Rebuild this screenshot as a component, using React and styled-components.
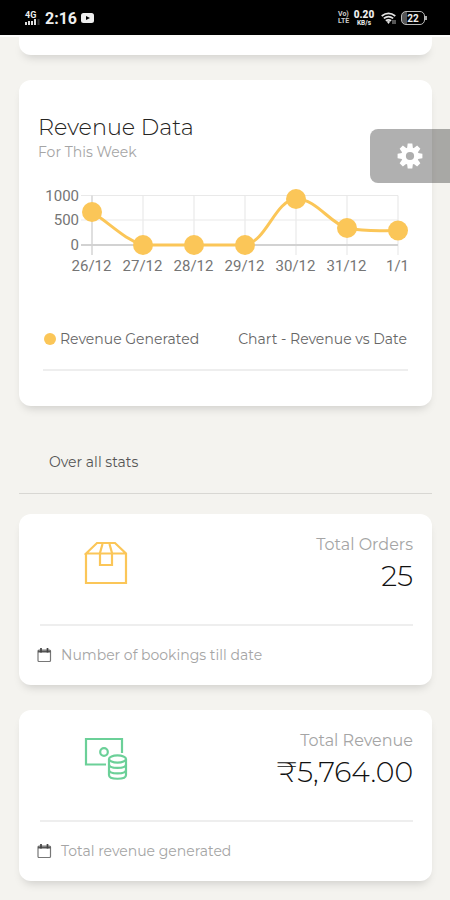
import React from "react";
import styled, { createGlobalStyle } from "styled-components";

const days = [
  { label: "26/12", x: 54, y: 32 },
  { label: "27/12", x: 105, y: 65 },
  { label: "28/12", x: 156, y: 65 },
  { label: "29/12", x: 207, y: 65 },
  { label: "30/12", x: 258, y: 19 },
  { label: "31/12", x: 309, y: 48 },
  { label: "1/1", x: 360, y: 50.5 },
];

const App = () => {
  return (
    <Page>
      <GlobalStyle />
      <StatusBar>
        <Stack>
          <span>4G</span>
          <Bars />
        </Stack>
        <Clock>2:16</Clock>
        <VideoIcon />
        <Spacer />
        <Volte>
          <span>Vo)</span>
          <span>LTE</span>
        </Volte>
        <Speed>
          <b>0.20</b>
          <span>KB/s</span>
        </Speed>
        <WifiIcon />
        <Battery>22</Battery>
      </StatusBar>
      <Content>
        <CardEnd />
        <ChartCard>
          <Title>Revenue Data</Title>
          <SubTitle>For This Week</SubTitle>
          <RevenueChart />
          <Legend>
            <Dot />
            <LegendText>Revenue Generated</LegendText>
            <Spacer />
            <LegendText>Chart - Revenue vs Date</LegendText>
          </Legend>
          <ChartLine />
        </ChartCard>
        <Section>Over all stats</Section>
        <StatCard>
          <StatTop>
            <BoxIcon />
            <Numbers>
              <Label>Total Orders</Label>
              <Value>25</Value>
            </Numbers>
          </StatTop>
          <StatFooter>
            <CalendarIcon />
            <Note>Number of bookings till date</Note>
          </StatFooter>
        </StatCard>
        <StatCard>
          <StatTop>
            <MoneyIcon />
            <Numbers>
              <Label>Total Revenue</Label>
              <Value>₹5,764.00</Value>
            </Numbers>
          </StatTop>
          <StatFooter>
            <CalendarIcon />
            <Note>Total revenue generated</Note>
          </StatFooter>
        </StatCard>
      </Content>
      <Settings>
        <GearIcon />
      </Settings>
    </Page>
  );
};

const Bars = () => (
  <svg width="15" height="6" viewBox="0 0 15 6">
    <path d="M1 3v3M4 2v4M7 2v4M10 0v6" stroke="#ddd" strokeWidth="2" />
    <path d="M13.5 0v6" stroke="#333" strokeWidth="2" />
  </svg>
);

const VideoIcon = () => (
  <svg width="13" height="10" viewBox="0 0 13 10">
    <rect width="13" height="10" rx="2.5" fill="#eee" />
    <path d="M5 3l4 2-4 2z" fill="#000" />
  </svg>
);

const WifiIcon = () => (
  <svg width="16" height="13" viewBox="0 0 16 13">
    <g fill="none" stroke="#e5e5e5" strokeWidth="1.7">
      <path d="M0.7 4Q7.5-1.4 14.3 4" />
      <path d="M2.8 6.4q4.7-3.6 9.4 0" />
      <path d="M4.8 8.8q2.7-2 5.4 0" />
    </g>
    <path d="M5.7 9.6q1.8-1.2 3.6 0L7.5 12z" fill="#e5e5e5" />
    <path d="M12 8v4M14 8v4" stroke="#aaa" strokeWidth="1" />
  </svg>
);

const RevenueChart = () => (
  <Chart viewBox="0 0 380 100">
    <g stroke="#e9e9e9" strokeWidth="1.2">
      <path d="M43 15.5H360M43 40H360" />
      {days.map((d) => (
        <path key={d.label} d={`M${d.x} 15.5V75`} />
      ))}
    </g>
    <path d="M54 15.5V75" stroke="#d2d2d2" strokeWidth="1.2" />
    <path d="M43 65H360" stroke="#d2d2d2" strokeWidth="2" />
    <path
      d="M54 32C74 45 86 59 105 65H207C229 61 237 20 258 19C279 19 290 42 309 48C329 52 340 50.5 360 50.5"
      fill="none"
      stroke="#fbc658"
      strokeWidth="3"
    />
    {days.map((d) => (
      <circle key={d.label} cx={d.x} cy={d.y} r="10" fill="#fbc658" />
    ))}
    <g textAnchor="end">
      <text x="41" y="20.5">1000</text>
      <text x="41" y="45">500</text>
      <text x="41" y="69.5">0</text>
    </g>
    <g textAnchor="middle">
      {days.map((d) => (
        <text key={d.label} x={d.x - 0.5} y="91">
          {d.label}
        </text>
      ))}
    </g>
  </Chart>
);

const BoxIcon = () => (
  <StatIcon viewBox="0 0 44 44" stroke="#fbc658">
    <path d="M2 12.5V42H42V12.5L31 2H13L2 12.5H42" />
    <path d="M18.5 3L16 12V24H28V12L25.5 3" />
  </StatIcon>
);

const MoneyIcon = () => (
  <StatIcon viewBox="0 0 44 44" stroke="#6bd098">
    <path d="M22 27.5H2V2H38V16" />
    <circle cx="20" cy="15" r="3.8" />
    <ellipse cx="33.5" cy="22" rx="8.5" ry="3.7" />
    <path d="M25 22V38C25 43 42 43 42 38V22" />
    <path d="M25 27.5C25 32 42 32 42 27.5M25 33C25 37.5 42 37.5 42 33" />
  </StatIcon>
);

const CalendarIcon = () => (
  <svg width="15" height="16" viewBox="0 0 15 16">
    <rect x="1" y="3" width="12.5" height="11.5" rx="1" fill="none" stroke="#777" strokeWidth="1.2" />
    <path d="M1 4.5H13.5" stroke="#555" strokeWidth="2" />
    <path d="M4 1V5.5M10.5 1V5.5" stroke="#444" strokeWidth="1.7" />
  </svg>
);

const GearIcon = () => (
  <svg width="26" height="26" viewBox="-13 -13 26 26">
    <g fill="#fff">
      {[0, 45, 90, 135].map((angle) => (
        <path key={angle} d="M-2.3-12.4H2.3L2.9-8V8L2.3 12.4H-2.3L-2.9 8V-8Z" transform={`rotate(${angle})`} />
      ))}
      <circle r="8.8" />
    </g>
    <circle r="4.1" fill="#aeaeae" />
  </svg>
);

const GlobalStyle = createGlobalStyle`
  * {
    box-sizing: border-box;
  }
  body {
    margin: 0;
    background-color: #f4f3ef;
    font-family: Montserrat, Inter, sans-serif;
    overflow: hidden;
  }
  svg {
    display: block;
    flex: none;
  }
`;
const Page = styled.div`
  position: relative;
  width: 450px;
  height: 900px;
  overflow: hidden;
  background-color: #f4f3ef;
`;
const StatusBar = styled.header`
  display: flex;
  align-items: center;
  height: 37px;
  padding: 1px 25px 0;
  border-bottom: 2px solid #fdfdfc;
  background-color: black;
  color: #eee;
  font-family: Roboto, sans-serif;
`;
const Stack = styled.div`
  display: flex;
  flex-direction: column;
  width: 20px;
  font-size: 9px;
  font-weight: bold;
  line-height: 8px;
`;
const Clock = styled.div`
  width: 36px;
  font-size: 16px;
  font-weight: bold;
`;
const Spacer = styled.div`
  flex: 1;
`;
const Volte = styled.div`
  display: flex;
  flex-direction: column;
  width: 16px;
  font-size: 7px;
  font-weight: bold;
  line-height: 7px;
  color: #ccc;
`;
const Speed = styled.div`
  display: flex;
  flex-direction: column;
  align-items: center;
  width: 20px;
  margin-right: 7px;
  font-size: 6.5px;
  font-weight: bold;
  line-height: 7px;
  b {
    font-size: 10px;
    line-height: 11px;
  }
`;
const Battery = styled.div`
  position: relative;
  display: flex;
  align-items: center;
  justify-content: center;
  width: 24px;
  height: 14px;
  margin-left: 4px;
  border: 1.5px solid #bbb;
  border-radius: 5px;
  background: linear-gradient(90deg, #555 22%, black 22%);
  font-size: 10px;
  font-weight: bold;
  &::after {
    content: "";
    position: absolute;
    right: -3px;
    width: 2px;
    height: 4px;
    background-color: #aaa;
  }
`;
const Content = styled.main`
  padding: 0 18px 0 19px;
`;
const Card = styled.section`
  background-color: white;
  border-radius: 12px;
  box-shadow: 0 6px 10px -4px rgba(0, 0, 0, 0.17);
`;
const CardEnd = styled(Card)`
  height: 18px;
  margin-bottom: 25px;
  border-radius: 0 0 12px 12px;
`;
const ChartCard = styled(Card)`
  height: 326px;
  padding: 33px 0 0 19px;
`;
const Title = styled.h1`
  margin: 0;
  font-size: 22.3px;
  font-weight: 300;
  line-height: 28px;
  color: #252422;
`;
const SubTitle = styled.div`
  font-size: 14px;
  line-height: 22px;
  color: #a5a5a5;
`;
const Chart = styled.svg`
  width: 380px;
  height: 100px;
  margin-top: 17px;
  text {
    font-family: Roboto, sans-serif;
    font-size: 15px;
    fill: #757575;
  }
`;
const Legend = styled.div`
  display: flex;
  align-items: center;
  height: 24px;
  margin-top: 47px;
  padding: 0 25px 0 6px;
`;
const Dot = styled.i`
  width: 12px;
  height: 12px;
  margin-right: 4px;
  border-radius: 50%;
  background-color: #fbc658;
`;
const LegendText = styled.span`
  font-size: 14px;
  color: #666;
`;
const ChartLine = styled.div`
  height: 2px;
  margin: 18px 24px 0 5px;
  background-color: #eee;
`;
const Section = styled.h2`
  height: 88px;
  margin: 0 0 20px;
  padding: 46px 0 0 30px;
  border-bottom: 1px solid #d8d7d3;
  font-size: 14px;
  font-weight: 400;
  line-height: 20px;
  color: #555;
`;
const StatCard = styled(Card)`
  height: 171px;
  margin-bottom: 25px;
  padding: 20px 19px 0 18px;
`;
const StatTop = styled.div`
  display: flex;
  justify-content: space-between;
  height: 92px;
  margin-left: 3px;
  padding-left: 44px;
  border-bottom: 2px solid #eee;
`;
const StatIcon = styled.svg`
  width: 44px;
  height: 44px;
  margin-top: 7px;
  fill: none;
  stroke-width: 2.2;
`;
const Numbers = styled.div`
  text-align: right;
  white-space: nowrap;
`;
const Label = styled.div`
  font-size: 16px;
  line-height: 22px;
  color: #a5a5a5;
`;
const Value = styled.div`
  font-size: 28.3px;
  font-weight: 300;
  line-height: 40px;
  color: #111;
`;
const StatFooter = styled.div`
  display: flex;
  align-items: center;
  height: 24px;
  margin-top: 17px;
`;
const Note = styled.span`
  margin-left: 9px;
  font-size: 14px;
  color: #a5a5a5;
`;
const Settings = styled.div`
  position: absolute;
  top: 129px;
  right: 0;
  display: flex;
  align-items: center;
  width: 80px;
  height: 54px;
  padding-left: 27px;
  border-radius: 8px 0 0 8px;
  background-color: rgba(0, 0, 0, 0.31);
`;

export default App;
